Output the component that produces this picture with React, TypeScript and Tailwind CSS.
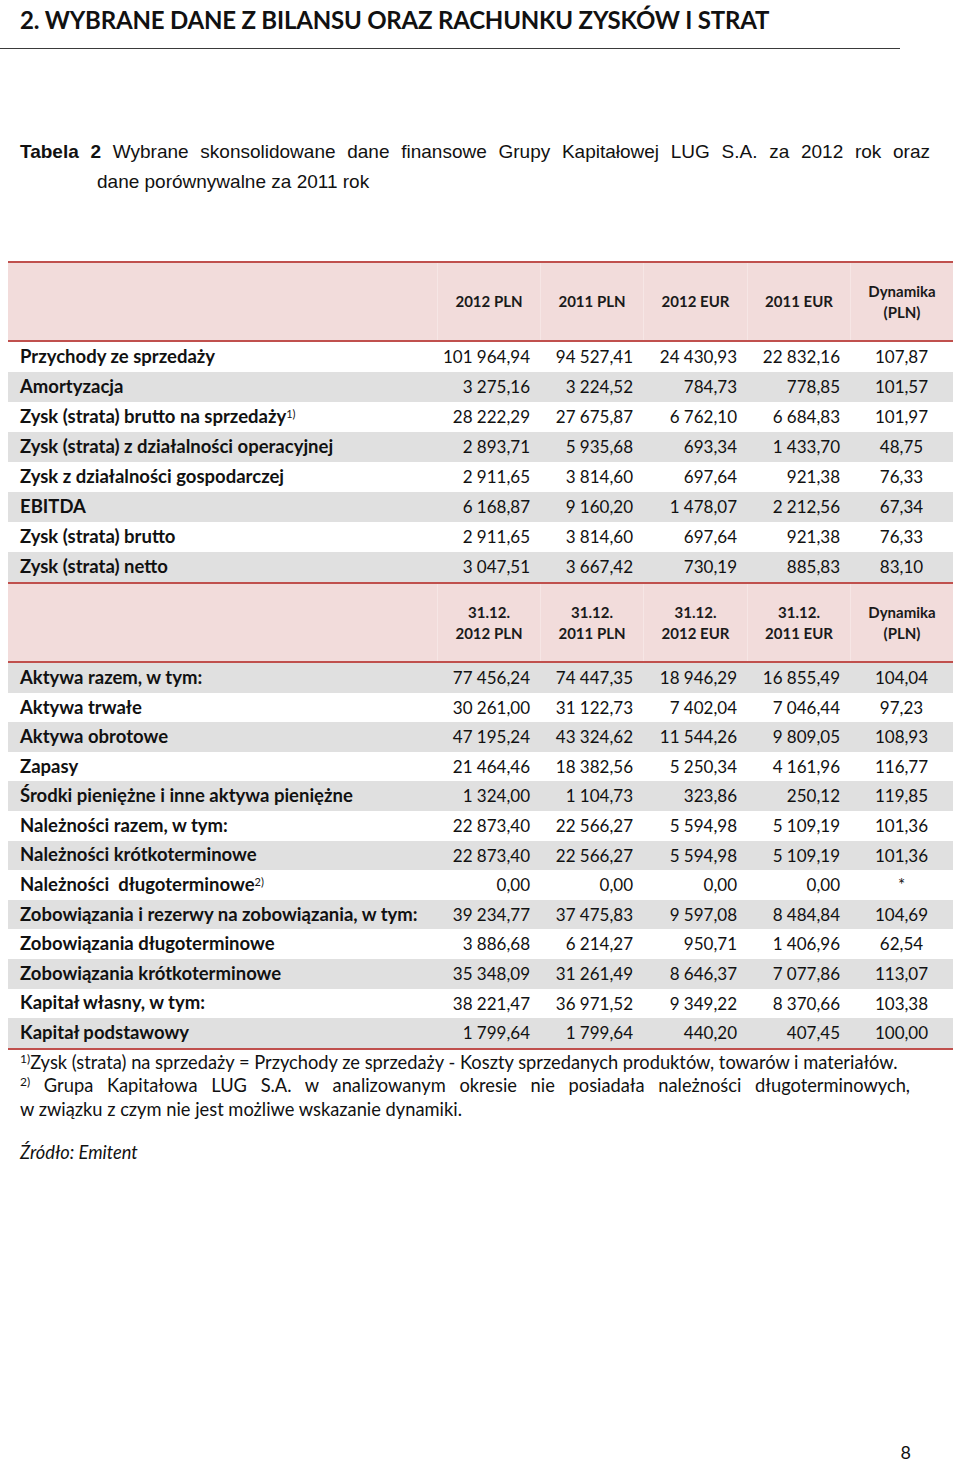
import React from 'react';

const font = { fontFamily: 'Lato, "Open Sans", sans-serif' };

type Row = { label: React.ReactNode; v: string[] };

const pnl: Row[] = [
  { label: 'Przychody ze sprzedaży', v: ['101 964,94', '94 527,41', '24 430,93', '22 832,16', '107,87'] },
  { label: 'Amortyzacja', v: ['3 275,16', '3 224,52', '784,73', '778,85', '101,57'] },
  {
    label: (
      <>
        Zysk (strata) brutto na sprzedaży<sup className="text-[11px] font-normal">1)</sup>
      </>
    ),
    v: ['28 222,29', '27 675,87', '6 762,10', '6 684,83', '101,97'],
  },
  { label: 'Zysk (strata) z działalności operacyjnej', v: ['2 893,71', '5 935,68', '693,34', '1 433,70', '48,75'] },
  { label: 'Zysk z działalności gospodarczej', v: ['2 911,65', '3 814,60', '697,64', '921,38', '76,33'] },
  { label: 'EBITDA', v: ['6 168,87', '9 160,20', '1 478,07', '2 212,56', '67,34'] },
  { label: 'Zysk (strata) brutto', v: ['2 911,65', '3 814,60', '697,64', '921,38', '76,33'] },
  { label: 'Zysk (strata) netto', v: ['3 047,51', '3 667,42', '730,19', '885,83', '83,10'] },
];

const balance: Row[] = [
  { label: 'Aktywa razem, w tym:', v: ['77 456,24', '74 447,35', '18 946,29', '16 855,49', '104,04'] },
  { label: 'Aktywa trwałe', v: ['30 261,00', '31 122,73', '7 402,04', '7 046,44', '97,23'] },
  { label: 'Aktywa obrotowe', v: ['47 195,24', '43 324,62', '11 544,26', '9 809,05', '108,93'] },
  { label: 'Zapasy', v: ['21 464,46', '18 382,56', '5 250,34', '4 161,96', '116,77'] },
  { label: 'Środki pieniężne i inne aktywa pieniężne', v: ['1 324,00', '1 104,73', '323,86', '250,12', '119,85'] },
  { label: 'Należności razem, w tym:', v: ['22 873,40', '22 566,27', '5 594,98', '5 109,19', '101,36'] },
  { label: 'Należności krótkoterminowe', v: ['22 873,40', '22 566,27', '5 594,98', '5 109,19', '101,36'] },
  {
    label: (
      <>
        Należności&nbsp; długoterminowe<sup className="text-[11px] font-normal">2)</sup>
      </>
    ),
    v: ['0,00', '0,00', '0,00', '0,00', '*'],
  },
  { label: 'Zobowiązania i rezerwy na zobowiązania, w tym:', v: ['39 234,77', '37 475,83', '9 597,08', '8 484,84', '104,69'] },
  { label: 'Zobowiązania długoterminowe', v: ['3 886,68', '6 214,27', '950,71', '1 406,96', '62,54'] },
  { label: 'Zobowiązania krótkoterminowe', v: ['35 348,09', '31 261,49', '8 646,37', '7 077,86', '113,07'] },
  { label: 'Kapitał własny, w tym:', v: ['38 221,47', '36 971,52', '9 349,22', '8 370,66', '103,38'] },
  { label: 'Kapitał podstawowy', v: ['1 799,64', '1 799,64', '440,20', '407,45', '100,00'] },
];

const cols = 'grid grid-cols-[429px_103px_103px_104px_103px_103px]';

const HeaderRow = ({ heads }: { heads: string[][] }) => (
  <div className={`${cols} h-[79px] bg-[#f2dcdb] border-b-2 border-[#c0504d]`}>
    <div />
    {heads.map((h, i) => (
      <div
        key={i}
        className="flex flex-col items-center justify-center border-l border-[#f6e6e5] text-[15px] font-bold leading-[21px] text-[#1a1a1a]"
      >
        {h.map((l, j) => (
          <span key={j}>{l}</span>
        ))}
      </div>
    ))}
  </div>
);

const DataRows = ({ rows, greyFirst, h }: { rows: Row[]; greyFirst: boolean; h: string }) => (
  <>
    {rows.map((r, i) => {
      const grey = greyFirst ? i % 2 === 0 : i % 2 === 1;
      return (
        <div key={i} className={`${cols} ${h} items-center ${grey ? 'bg-[#e0e0e0]' : 'bg-white'} text-[17px] text-[#111]`}>
          <div className="pl-[12px] text-[18.5px] font-bold whitespace-nowrap">{r.label}</div>
          {r.v.map((x, j) => (
            <div key={j} className={j === 4 ? 'text-center' : 'text-right pr-[10px] whitespace-nowrap'}>
              {x}
            </div>
          ))}
        </div>
      );
    })}
  </>
);

export default function App() {
  return (
    <div className="h-[1461px] w-[960px] bg-white flex flex-col text-[#111]" style={font}>
      <h1 className="pl-[20px] pt-[3px] text-[24px] font-bold leading-[34px] tracking-[-0.2px] text-[#111]">
        2. WYBRANE DANE Z BILANSU ORAZ RACHUNKU ZYSKÓW I STRAT
      </h1>
      <div className="mt-[11px] h-px w-[900px] bg-[#3a3a3a]" />

      <div
        className="mt-[88px] pl-[20px] w-[930px] text-[19px] leading-[30px]"
        style={{ fontFamily: '"Liberation Sans Narrow", "Arial Narrow", "Liberation Sans", sans-serif' }}
      >
        <p className="text-justify [text-align-last:justify]">
          <b>Tabela 2</b> Wybrane skonsolidowane dane finansowe Grupy Kapitałowej LUG S.A. za 2012 rok oraz
        </p>
        <p className="pl-[77px]">dane porównywalne za 2011 rok</p>
      </div>

      <div className="mt-[64px] ml-[8px] w-[945px] border-t-2 border-[#c0504d]">
        <HeaderRow heads={[['2012 PLN'], ['2011 PLN'], ['2012 EUR'], ['2011 EUR'], ['Dynamika', '(PLN)']]} />
        <DataRows rows={pnl} greyFirst={false} h="h-[30px]" />
        <div className="border-t-2 border-[#c0504d]" />
        <HeaderRow
          heads={[
            ['31.12.', '2012 PLN'],
            ['31.12.', '2011 PLN'],
            ['31.12.', '2012 EUR'],
            ['31.12.', '2011 EUR'],
            ['Dynamika', '(PLN)'],
          ]}
        />
        <DataRows rows={balance} greyFirst={true} h="h-[29.6px]" />
        <div className="border-t-2 border-[#c0504d]" />
      </div>

      <div className="pl-[20px] w-[910px] text-[18.3px] leading-[23.5px] mt-[1px]">
        <p className="whitespace-nowrap">
          <sup className="text-[12px]">1)</sup>Zysk (strata) na sprzedaży = Przychody ze sprzedaży - Koszty sprzedanych produktów, towarów i materiałów.
        </p>
        <p className="text-justify [text-align-last:justify]">
          <sup className="text-[12px]">2)</sup> Grupa Kapitałowa LUG S.A. w analizowanym okresie nie posiadała należności długoterminowych,
        </p>
        <p>w związku z czym nie jest możliwe wskazanie dynamiki.</p>
        <p className="mt-[20px] italic">Źródło: Emitent</p>
      </div>

      <div className="mt-auto pr-[49px] text-right text-[18px] leading-[18px]">8</div>
    </div>
  );
}
